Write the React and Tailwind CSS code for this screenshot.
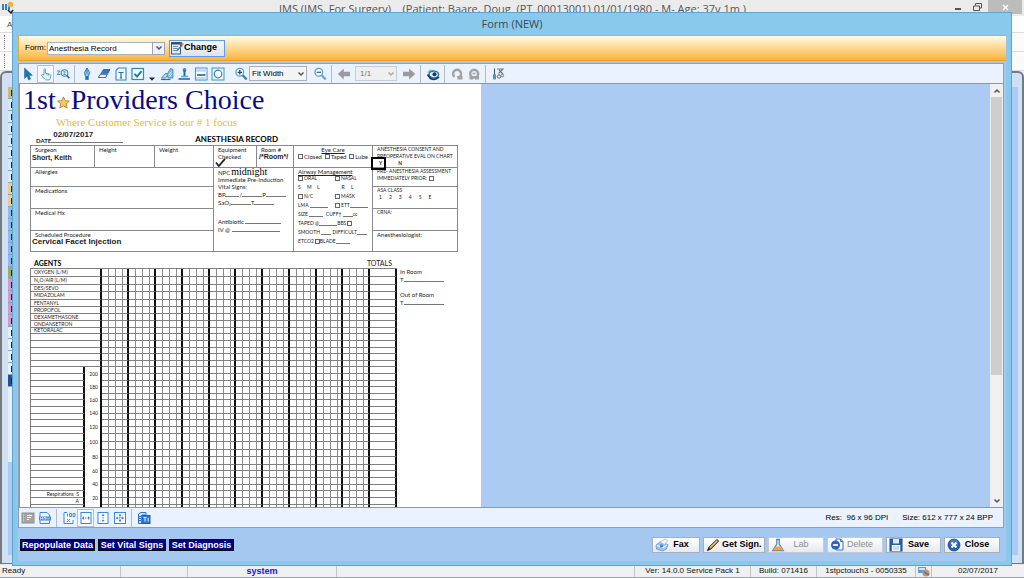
import React from "react";

const SANS = "font-['Liberation_Sans',Arial,sans-serif]";

/* ---------- icons ---------- */
function Svg({ size = 14, box = 14, children }) {
  return (
    <svg width={size} height={size} viewBox={`0 0 ${box} ${box}`} fill="none" aria-hidden="true" className="shrink-0">
      {children}
    </svg>
  );
}

const NAVY = "#1f6fae";
const icons = {
  pointer: <Svg><path d="M3.500 1v10.500l2.600-2.200 1.500 3.700 2-.9-1.500-3.500 3.200-.3z" fill="#1b78b8" stroke="#155f94" strokeWidth=".5" /></Svg>,
  hand: <Svg><path d="M5 7.800V2.600c0-1.200 1.600-1.200 1.600 0v3.600l4 .9c1 .3 1.300.8 1.200 1.800l-.4 2.600c-.2.9-.7 1.400-1.600 1.400H7.200c-.7 0-1.200-.3-1.600-.9L2.600 8.700c-.5-.9.7-1.700 1.400-.9z" fill="#e4f3fb" stroke="#4e9cc6" strokeWidth=".9" /><path d="M8 6.600v2M9.500 7v1.800" stroke="#4e9cc6" strokeWidth=".7" /></Svg>,
  zoomRect: <Svg><circle cx="8.500" cy="6" r="3.300" stroke="#3c86b6" strokeWidth="1.100" /><path d="M10.900 8.500l2.400 2.800" stroke={NAVY} strokeWidth="1.600" /><path d="M1 4h3L1.200 7.500H4.500" stroke="#3c86b6" strokeWidth=".9" /><path d="M7 4.800h2.600L7.500 7.500h2.600" stroke="#3c86b6" strokeWidth=".8" /></Svg>,
  pen: <Svg><path d="M7 1l2.600 4.600L8.400 9.500H5.600L4.400 5.600z" fill="#8cc8e8" stroke={NAVY} strokeWidth=".9" /><path d="M7 1v5.500" stroke={NAVY} strokeWidth=".8" /><rect x="5.300" y="9.800" width="3.400" height="3" fill={NAVY} /></Svg>,
  eraser: <Svg><path d="M6.500 2.500H13L8.500 10.500H1.500z" fill="#6fb0e6" stroke="#2a5fae" strokeWidth=".9" /><path d="M3.200 7.600h6.700l-1.400 2.900H1.500z" fill="#fff" stroke="#2a5fae" strokeWidth=".8" /><path d="M6.500 2.500H13l-2.400 4.200H4.200z" fill="#3b6fc0" /></Svg>,
  textDoc: <Svg><path d="M2 3.500L4.500 1H12v12H2z" fill="#f3fafe" stroke="#2f88b8" strokeWidth="1.100" /><path d="M4.500 5.500h5M7 5.500V11M5.800 11h2.400" stroke={NAVY} strokeWidth="1.200" /></Svg>,
  check: <Svg><rect x="1" y="1.500" width="11.500" height="11" fill="#f3fafe" stroke="#2f88b8" strokeWidth="1.200" /><path d="M3.500 6.800l2.600 2.800 4.400-5.400" stroke="#1b78a8" strokeWidth="1.900" /></Svg>,
  sign: <Svg><path d="M1 12.500h9.500" stroke={NAVY} strokeWidth="1.200" /><path d="M1.500 11L6 6l2 2-2.500 3z" fill="#b9dcf0" stroke="#3a88b4" strokeWidth=".9" /><path d="M7 7.500l3.500-6 2.500 1v8.500H8z" fill="#7ab9dc" stroke="#3a88b4" strokeWidth=".8" /><path d="M8.500 8.500l3-4M9.500 10l2.500-3.500" stroke="#fff" strokeWidth=".8" /></Svg>,
  stamp: <Svg><circle cx="7.500" cy="3" r="1.900" fill="#3b93c4" /><path d="M7.500 3v6" stroke={NAVY} strokeWidth="2" /><path d="M4 9.500h7" stroke="#62add6" strokeWidth="1.600" /><path d="M1.500 12h11.500" stroke={NAVY} strokeWidth="1.600" /></Svg>,
  lineBox: <Svg><rect x="1.500" y="1" width="11.500" height="12" fill="#fff" stroke="#4a9ad8" strokeWidth="1.100" /><path d="M2 3.500h11" stroke="#b7d8f4" strokeWidth="2.500" /><path d="M3 8h8.500" stroke={NAVY} strokeWidth="1.700" /><path d="M2 11h11" stroke="#b7d8f4" strokeWidth="1.800" /></Svg>,
  circleBox: <Svg><rect x="1" y="1" width="12" height="12" fill="#e8f5fc" stroke="#4a9fc8" strokeWidth="1.100" /><circle cx="7" cy="7" r="3.800" fill="#fff" stroke="#2f88b8" strokeWidth="1.200" /></Svg>,
  zoomIn: <Svg><circle cx="5.800" cy="5.300" r="3.900" fill="#f5fbff" stroke="#5b9fd0" strokeWidth="1.200" /><path d="M8.700 8.300l4 4.200" stroke="#3d78b5" strokeWidth="2.200" /><path d="M3.600 5.300H8M5.800 3.100v4.400" stroke="#27406e" strokeWidth="1.300" /></Svg>,
  zoomOut: <Svg><circle cx="5.800" cy="5.300" r="3.900" fill="#f5fbff" stroke="#5b9fd0" strokeWidth="1.200" /><path d="M8.700 8.300l4 4.200" stroke="#6aa3d4" strokeWidth="2.200" /><path d="M3.600 5.300H8" stroke="#3a5a8c" strokeWidth="1.200" /></Svg>,
  left: <Svg><path d="M.8 7l6-5.500v3.200H13v4.600H6.800v3.200z" fill="#9b9b9b" /></Svg>,
  right: <Svg><path d="M13.200 7l-6-5.500v3.200H1v4.600h6.200v3.200z" fill="#9b9b9b" /></Svg>,
  eye: <Svg><path d="M1 5.500L4 2.500l4.500.5-2 2.500z" fill="#6cc0e0" /><ellipse cx="7.800" cy="7.500" rx="4.800" ry="3.400" fill="#dff2fb" stroke="#1f6fa8" strokeWidth="1.400" /><circle cx="8.500" cy="7.300" r="2" fill="#123a66" /><path d="M1.500 7.500l3 4c3 1.500 6 1 8.500-1.500" stroke="#123a66" strokeWidth="1.700" /></Svg>,
  rotateL: <Svg><path d="M4.500 9.800A4 4 0 1 1 10 9.500" stroke="#a3a3a3" strokeWidth="2.400" /><path d="M7 9h5.500v3.500H7.500z" fill="#a3a3a3" /></Svg>,
  rotateR: <Svg><path d="M4.500 9.800A4 4 0 1 1 9.800 9.800" stroke="#a3a3a3" strokeWidth="2.400" /><path d="M2.500 9H12v3.500H8L7 11l-1 1.500H2.500z" fill="#a3a3a3" /><path d="M5.500 6.500h3" stroke="#a3a3a3" strokeWidth="1.600" /></Svg>,
  tools: <Svg><path d="M3.500 1.500v6" stroke="#555" strokeWidth="1.100" /><rect x="2" y="7" width="3" height="5.500" rx="1" fill="#4d92c4" /><path d="M6 2h6L7.500 6.500M8 3l4 4" stroke="#777" strokeWidth="1.100" /><circle cx="8" cy="9.500" r="1.700" stroke="#666" /><circle cx="11.200" cy="8.500" r="1.400" stroke="#777" /></Svg>,
  panel: <Svg><rect x="1" y="2" width="12" height="10" fill="#a5a5a5" stroke="#8d8d8d" /><path d="M2.500 3.500v7" stroke="#e8e8e8" strokeWidth=".8" strokeDasharray="1 1" /><path d="M6 4.500h5M6 6.500h4M6 8.500h2" stroke="#fff" /></Svg>,
  snap: <Svg><path d="M2 7V1.500h7L11.500 4v3" stroke="#3b86e0" fill="#fff" /><rect x="1" y="5.500" width="12" height="4" fill="#3b86e0" /><path d="M2.500 8.500v-2l1 1 1-1v2M6 8.500v-2h1.500v2M9 6.500v2M11 6.500v2" stroke="#fff" strokeWidth=".7" /><path d="M2 9.500v3h9.500v-3" stroke="#3b86e0" /></Svg>,
  full: <Svg><path d="M5 1.500H2v11h9V9" stroke="#3b86e0" fill="#fff" /><path d="M5.500 5.500V2.500M7.500 2.500h2v3h-2zM11 2.500h2v3h-2z" stroke="#3b86e0" strokeWidth=".9" /><path d="M5 8l3 3M8 8l-3 3" stroke="#3b86e0" strokeWidth=".9" /></Svg>,
  fitW: <Svg><rect x="2" y="1.500" width="10" height="11" fill="#fff" stroke="#3b86e0" /><path d="M3.500 7h7" stroke="#3b86e0" strokeDasharray="1.500 1" /><path d="M5 5L3 7l2 2zM9 5l2 2-2 2z" fill="#3b86e0" /></Svg>,
  fitH: <Svg><rect x="2" y="1.500" width="10" height="11" fill="#fff" stroke="#3b86e0" /><path d="M7 3.500v7" stroke="#3b86e0" strokeDasharray="1.500 1" /><path d="M5.500 5L7 3l1.500 2zM5.500 9L7 11l1.500-2z" fill="#3b86e0" /></Svg>,
  fitAll: <Svg><rect x="1.500" y="1.500" width="11" height="11" fill="#fff" stroke="#3b86e0" /><path d="M7 3v8M3 7h8" stroke="#3b86e0" strokeDasharray="1.500 1" /><path d="M5.500 5L7 3l1.500 2zM5.500 9L7 11l1.500-2zM5 5.500L3 7l2 1.500zM9 5.500L11 7 9 8.500z" fill="#3b86e0" /></Svg>,
  ocr: <Svg><path d="M1.500 3L4 1.500h5V4H5v8.500H1.500z" fill="#cfe3fb" stroke="#2f6fd0" /><path d="M2 5.500h2M2 7.500h2M2 9.500h2" stroke="#2f6fd0" /><rect x="5" y="4.500" width="8" height="8" fill="#2f78dc" stroke="#1f5cb8" /><path d="M6.500 6.500h3M8 6.500v4M11.200 7v3.500" stroke="#fff" strokeWidth=".9" /></Svg>,
  form: <Svg><rect x="1.500" y="1.500" width="9" height="11.500" fill="#dceaf5" stroke="#3c5c78" /><path d="M1.500 2.500h9" stroke="#2f4f78" strokeWidth="2" /><path d="M3 5.500h5M3 7.500h5M3 9.500h3" stroke="#5d7f9c" strokeWidth=".8" /><path d="M12 4.500L6.500 10" stroke="#4a90a8" strokeWidth="1.700" /><path d="M11.500 1v4.500M9.500 3.200h4" stroke="#b85a28" strokeWidth="1.300" /></Svg>,
  fax: <Svg><path d="M1 7l4-3 8 2.500-1.500 4.500-4 2L1.500 11z" fill="#9cc6ee" stroke="#5f97d0" strokeWidth=".8" /><path d="M5 4l5-3 2.500 1.500-3 4z" fill="#f4f9ff" stroke="#8ab4e0" strokeWidth=".7" /><path d="M2 7.500l6 2 4-2.500" stroke="#fff" strokeWidth="1.200" /><circle cx="6.500" cy="8" r="1.700" fill="#3c8be0" /></Svg>,
  pencil: <Svg><path d="M1.500 12.500L3 9l8-7.500L12.800 3 5 11z" fill="#c98a3c" stroke="#3a3f58" strokeWidth="1" /><path d="M4 9.500L11 3" stroke="#f2dfa8" strokeWidth=".9" /><path d="M1 13l2-3.500 1.500 1.500z" fill="#222" /></Svg>,
  flask: <Svg><path d="M5 1.500h4M5.800 1.500V6L1.800 12.500h10.400L8.200 6V1.500" fill="#eef6ff" stroke="#5c86c4" strokeWidth="1.300" /><path d="M4.300 8.500h5.400l2.200 3.800H2.100z" fill="#f5a81c" /></Svg>,
  remove: <Svg><path d="M6 1h4.500L13 3.500V12H6z" fill="#fff" stroke="#3b6fc0" /><path d="M10.500 1v2.500H13" stroke="#3b6fc0" /><circle cx="5.500" cy="7" r="4.500" fill="#2567c8" /><path d="M3 7h5" stroke="#fff" strokeWidth="1.800" /></Svg>,
  save: <Svg><rect x="1" y="1" width="12" height="12" fill="#2a62ae" stroke="#1d4a88" /><rect x="4" y="1" width="6" height="4.500" fill="#dce9f8" /><rect x="2.800" y="7" width="8.500" height="6" fill="#f4f8fd" /><path d="M4 9h6M4 11h6" stroke="#8db2e0" strokeWidth=".8" /></Svg>,
  close: <Svg><circle cx="7" cy="7" r="6" fill="#2562a8" stroke="#184888" strokeWidth=".8" /><circle cx="7" cy="5.500" r="4" fill="#5590d0" opacity=".6" /><path d="M4.500 4.500l5 5M9.500 4.500l-5 5" stroke="#fff" strokeWidth="1.800" /></Svg>,
};

function Chevron({ className, dir = "down" }) {
  return (
    <svg width="8" height="6" viewBox="0 0 8 6" fill="none" aria-hidden="true" className={className}>
      <path d={dir === "down" ? "M1.500 1.500L4 4l2.500-2.500" : "M1.500 4.500L4 2l2.500 2.500"} stroke="currentColor" strokeWidth="1.500" />
    </svg>
  );
}

function Tool({ icon, label, active }) {
  return (
    <button
      type="button"
      aria-label={label}
      className={`flex h-[18px] w-[17px] shrink-0 items-center justify-center border ${active ? "border-[#b8c0cc] bg-[#f5f8fd]" : "border-transparent"}`}
    >
      {icons[icon]}
    </button>
  );
}

function Sep() {
  return <div className="mx-[3px] h-[18px] w-px shrink-0 bg-[#b4bac6]" />;
}

/* ---------- main window behind the dialog ---------- */
const RAIL = [
  "bg-[#d9b96a]", "bg-[#d5e7f8]", "bg-[#d5e7f8]", "bg-[#d5e7f8]", "bg-[#d5e7f8]", "bg-[#d5e7f8]", "bg-[#d5e7f8]",
  "bg-[#d5e7f8]", "bg-[#f0cd84]", "bg-[#f0cd84]", "bg-[#8fbcf0]", "bg-[#8fbcf0]", "bg-[#8fbcf0]", "bg-[#8fbcf0]",
  "bg-[#8fbcf0]", "bg-[#9cae62]", "bg-[#d996d0]", "bg-[#d996d0]", "bg-[#d996d0]", "bg-[#d996d0]", "bg-[#e3eff9]",
  "bg-[#e3eff9]", "bg-[#e3eff9]", "bg-[#e3eff9]", "bg-[#1f5494]",
];

function Grip() {
  return (
    <div className="flex h-[19px] items-center border-b border-[#dcdcdc] bg-[#fafafa] pl-1">
      <div className="h-3.5 w-px border-l border-dotted border-[#777]" />
    </div>
  );
}

function StatusCell({ className, children }) {
  return <div className={`flex items-center border-r border-[#c4c4c4] whitespace-nowrap ${className}`}>{children}</div>;
}

function MainWindow() {
  return (
    <div className="flex h-full flex-col bg-[#f0f0f0]">
      <div className="flex h-4 shrink-0 items-start bg-[#ebebeb]">
        <svg width="13" height="14" viewBox="0 0 13 14" className="ml-px" aria-hidden="true">
          <path d="M1 4h2v6H1zM4 4h2v6H4zM7 4h2v6H7z" fill="#2f7fd8" />
          <circle cx="9.500" cy="4.500" r="2.800" fill="#f0b43c" />
          <path d="M7 10l3 3 2-3" stroke="#222" strokeWidth="1.500" fill="none" />
        </svg>
        <div className="flex-1 pl-14 text-center font-['Open_Sans','Noto_Sans',sans-serif] text-[11px] leading-[18px] whitespace-pre text-[#555]">
          {"IMS (IMS, For Surgery)    (Patient: Baare, Doug  (PT_00013001) 01/01/1980 - M- Age: 37y 1m )"}
        </div>
        <div className="flex items-start gap-3">
          <button type="button" aria-label="Minimize" className="mt-2 h-0.5 w-1.5 bg-[#555]" />
          <button type="button" aria-label="Restore" className="mt-[3px]">
            <svg width="9" height="8" viewBox="0 0 9 8" fill="none" stroke="#555">
              <path d="M2.500 2.500V.5h6v4.500h-2" /><path d="M.5 3h6v4.500h-6z" />
            </svg>
          </button>
          <button type="button" aria-label="Close window" className="mr-0.5 -ml-1.5 flex h-3.5 w-[34px] items-center justify-center bg-[#bcbcbc]">
            <svg width="7" height="7" viewBox="0 0 7 7" stroke="#fff" strokeWidth="1.400"><path d="M1 1l5 5M6 1L1 6" /></svg>
          </button>
        </div>
      </div>
      <div className="h-[17px] shrink-0 border-b border-[#dcdcdc] bg-white pl-[7px] text-[8px] leading-[17px] text-[#444]">A</div>
      <Grip />
      <Grip />
      <div className="flex min-h-0 flex-1 justify-between rounded-t-md border-2 border-b border-[#77797d] bg-[#cfe0f4] pt-3.5 pb-2">
        <div className="ml-1.5 flex w-1 flex-col overflow-hidden bg-[#a9cbf5]">
          {RAIL.map((c, i) => (
            <div key={i} className={`flex h-3 shrink-0 items-center justify-end border-b border-[#8aa4c0] ${c}`}>
              <div className="h-1.5 w-px bg-[#223]" />
            </div>
          ))}
          <div className="h-[75px] bg-[#e4effa]" />
        </div>
        <div className="mr-1 -ml-1 w-2 bg-[#a9cbf5]" />
      </div>
      <div className="flex h-3.5 shrink-0 items-stretch border-t border-b border-t-[#e8e8e8] border-b-[#8fa6b0] bg-[#f0f0f0] text-[8px] leading-3 text-[#111]">
        <StatusCell className="w-[121px] pl-0.5">Ready</StatusCell>
        <StatusCell className="w-[67px]" />
        <StatusCell className="w-[149px] justify-center text-[9px] font-bold text-[#1010e8]">system</StatusCell>
        <StatusCell className="flex-1" />
        <StatusCell className="w-[116px] justify-center">Ver: 14.0.0 Service Pack 1</StatusCell>
        <StatusCell className="w-[66px] justify-center">Build: 071416</StatusCell>
        <StatusCell className="w-[99px] justify-center">1stpctouch3 - 0050335</StatusCell>
        <StatusCell className="w-4 justify-center">
          <svg width="13" height="11" viewBox="0 0 13 11" aria-hidden="true">
            <rect x="1" y="1" width="8" height="6" fill="#5b9be0" /><rect x="2" y="2" width="6" height="2" fill="#cfe4fa" />
            <circle cx="9" cy="7" r="3.500" fill="#e2894a" /><path d="M7 6l5 3" stroke="#3f7fd0" strokeWidth="1.600" />
          </svg>
        </StatusCell>
        <div className="flex w-[92px] items-center justify-center">02/07/2017</div>
      </div>
    </div>
  );
}

/* ---------- anesthesia record sheet ---------- */
const LINE = "border-[#8a8a8a]";

function Box() {
  return <input type="checkbox" className="h-[5px] w-[5px] shrink-0 appearance-none border border-[#666] bg-white" />;
}
function Option({ children, after }) {
  return (
    <label className="flex items-center gap-px">
      {!after && <Box />}
      {children}
      {after && <Box />}
    </label>
  );
}
function Blank({ className }) {
  return <span className={`h-[5px] shrink-0 border-b border-[#777] ${className}`} />;
}
function Row({ className = "", children }) {
  return <div className={`flex h-[9px] items-center whitespace-pre ${className}`}>{children}</div>;
}

function Header() {
  return (
    <div>
      <div className="flex items-center pt-0.5 pl-[3px] font-['Liberation_Serif',serif] text-[28px] leading-[27px] text-[#0b0b80]">
        1st
        <svg width="13" height="13" viewBox="0 0 13 13" className="mx-px mt-1.5" aria-hidden="true">
          <path d="M6.500.8l1.700 3.900 4.200.4-3.200 2.800 1 4.200-3.700-2.200-3.700 2.200 1-4.200L.6 5.100l4.200-.4z" fill="#f6c868" stroke="#a8742c" strokeWidth=".8" />
        </svg>
        Providers Choice
      </div>
      <div className="pt-px pl-9 font-['Liberation_Serif',serif] text-[11px] leading-4 text-[#e8b838]">Where Customer Service is our # 1 focus</div>
      <div className="flex h-[15px] items-end pl-4 text-[6px] leading-[8px] font-bold">
        <span>DATE</span>
        <span className={`mb-0.5 h-3 w-[72px] border-b border-[#777] pl-0.5 text-[8px] leading-[7px] ${SANS}`}>02/07/2017</span>
        <h1 className="ml-[72px] text-[8px] leading-[12px] text-black">ANESTHESIA RECORD</h1>
      </div>
    </div>
  );
}

function Patient() {
  return (
    <div className={`w-[183px] shrink-0 border-r ${LINE} flex flex-col`}>
      <div className={`flex h-[22px] border-b ${LINE}`}>
        <div className={`w-16 border-r ${LINE}`}>
          <div className="pl-1">Surgeon</div>
          <div className={`pl-px text-[7px] leading-[9px] font-bold ${SANS}`}>Short, Keith</div>
        </div>
        <div className={`w-[60px] border-r ${LINE} pl-1`}>Height</div>
        <div className="pl-1">Weight</div>
      </div>
      <div className={`h-[19px] border-b ${LINE} pl-1`}>Allergies</div>
      <div className={`h-[22px] border-b ${LINE} pl-1`}>Medications</div>
      <div className={`h-[22px] border-b ${LINE} pl-1`}>Medical Hx</div>
      <div className="pl-1">Scheduled Procedure</div>
      <div className={`pl-px text-[8px] leading-[8px] font-bold ${SANS}`}>Cervical Facet Injection</div>
    </div>
  );
}

function Preop() {
  return (
    <div className={`w-20 shrink-0 border-r ${LINE}`}>
      <div className={`flex h-[22px] border-b ${LINE}`}>
        <div className={`relative w-[43px] border-r ${LINE} pl-1`}>
          Equipment<br />Checked
          <svg width="11" height="9" viewBox="0 0 11 9" className="absolute bottom-0 left-px" aria-hidden="true">
            <path d="M1 4.500L3.800 8 10 .8" stroke="#222" strokeWidth="1.800" fill="none" />
          </svg>
        </div>
        <div>
          <div className="pl-1">Room #</div>
          <div className={`pl-0.5 text-[7px] leading-[7px] font-bold ${SANS}`}>/*Room*/</div>
        </div>
      </div>
      <div className="pl-1">
        <div className="flex items-center gap-px">
          NPC<span className="font-['Liberation_Serif',serif] text-[10px] leading-[8px] text-black">midnight</span>
        </div>
        <div className="whitespace-nowrap">Immediate Pre-Induction</div>
        <div>Vital Signs:</div>
        <Row>BP<Blank className="w-3.5" />/<Blank className="w-5" />{"    "}P<Blank className="w-5" /></Row>
        <Row className="-mt-px">SaO₂<Blank className="w-5" />{"   "}T<Blank className="w-5" /></Row>
        <Row className="mt-2.5">Antibiotic <Blank className="w-9" /></Row>
        <Row className="-mt-px">IV @ <Blank className="w-12" /></Row>
      </div>
    </div>
  );
}

function Airway() {
  return (
    <div className={`w-[79px] shrink-0 border-r ${LINE} pl-1`}>
      <div className={`-ml-1 h-[22px] border-b ${LINE}`}>
        <div className="text-center underline">Eye Care</div>
        <div className="flex justify-between pr-1 pl-1">
          <Option>Closed</Option><Option>Taped</Option><Option>Lube</Option>
        </div>
      </div>
      <div className="underline">Airway Management</div>
      <div className="-mt-px text-[5px]">
        <div className="grid grid-cols-2">
          <Row><Option>ORAL</Option></Row>
          <Row><Option>NASAL</Option></Row>
          <Row>{"S     M    L"}</Row>
          <Row>{"     R     L"}</Row>
          <Row><Option>N/C</Option></Row>
          <Row><Option>MASK</Option></Row>
          <Row>LMA <Blank className="w-[18px]" /></Row>
          <Row><Option>ETT</Option><Blank className="w-[18px]" /></Row>
        </div>
        <Row>SIZE <Blank className="w-3.5" />{"  CUFF† "}<Blank className="w-2.5" />cc</Row>
        <Row>TAPED @<Blank className="w-[18px]" />{"  "}<Option after>BBS</Option></Row>
        <Row>SMOOTH <Blank className="w-2.5" /> DIFFICULT<Blank className="w-2.5" /></Row>
        <Row><Option after>ETCO2</Option>{"      "}BLADE<Blank className="w-3.5" /></Row>
      </div>
    </div>
  );
}

function Consent() {
  return (
    <div className="relative flex min-w-0 flex-1 flex-col text-[5px] whitespace-pre">
      <div className={`h-[22px] border-b ${LINE} pl-1`}>
        ANESTHESIA CONSENT AND<br />PREOPERATIVE EVAL ON CHART
        <div className="flex gap-4 pl-0.5 leading-[7px] font-bold"><span>Y</span><span>N</span></div>
      </div>
      <div className="absolute top-[11px] -left-0.5 h-[13px] w-[15px] border-2 border-black" />
      <div className={`h-[19px] border-b ${LINE} pl-1`}>
        PRE- ANESTHESIA ASSESSMENT<br />
        <Option after>IMMEDIATELY PRIOR: </Option>
      </div>
      <div className={`h-[22px] border-b ${LINE} pl-1`}>
        ASA CLASS
        <div className="flex gap-[7px] pl-0.5"><span>1</span><span>2</span><span>3</span><span>4</span><span>5</span><span>E</span></div>
      </div>
      <div className={`h-[22px] border-b ${LINE} pl-1`}>CRNA:</div>
      <div className="pl-1 text-[6px]">Anesthesiologist:</div>
    </div>
  );
}

const AGENTS = ["OXYGEN (L/M)", "N₂O/AIR (L/M)", "DES/SEVO", "MIDAZOLAM", "FENTANYL", "PROPOFOL", "DEXAMETHASONE", "ONDANSETRON", "KETORALAC"];
const AGENT_HEIGHTS = [8, 8, 7, 8, 7, 7, 7, 7, 6];
const TAIL_HEIGHTS = [7, 7, 6, 7, 6, 7, 7, 6, 7, 6, 7, 7, 6, 7, 7, 8, 8, 7, 8, 6, 7, 7, 6, 7, 7, 7, 6, 7];
const HEIGHTS = [...AGENT_HEIGHTS, ...TAIL_HEIGHTS];
const SCALE_START = 14;
const GROUPS = [27, 27, 27, 27, 26, 27, 27, 27, 26, 27];
const SIDE = { 32: "Respirations  S", 33: "A" };

function Grid() {
  return (
    <table className="w-[366px] table-fixed border-separate border-spacing-0 border-t border-l border-[#808080] text-[5px] leading-[5px]">
      <colgroup>
        <col className="w-[54px]" />
        <col className="w-[17px]" />
        {GROUPS.map((w, g) => [7, 7, 7, w - 21].map((c, i) => <col key={`${g}-${i}`} style={{ width: c }} />))}
        <col className="w-[27px]" />
      </colgroup>
      <tbody>
        {HEIGHTS.map((h, r) => {
          const k = r - SCALE_START;
          return (
            <tr key={r} style={{ height: h }}>
              {k < 0 ? (
                <th colSpan={2} scope="row" className="border-r-2 border-b border-r-[#111] border-b-[#808080] p-0 pl-[3px] text-left font-normal whitespace-nowrap">
                  {AGENTS[r]}
                </th>
              ) : (
                <th scope="row" className="border-r-2 border-b border-r-[#111] border-b-[#808080] p-0 pr-1 text-right font-normal whitespace-pre">{SIDE[r]}</th>
              )}
              {k >= 0 && k % 2 === 0 && (
                <td rowSpan={2} className="border-r-2 border-[#111] p-0 pr-0.5 text-right">{k < 20 ? 200 - k * 10 : ""}</td>
              )}
              {Array.from({ length: 40 }, (_, c) => (
                <td key={c} className={`border-b border-b-[#808080] p-0 ${c % 4 === 3 ? "border-r-2 border-r-[#111]" : "border-r border-r-[#8a8a8a]"}`} />
              ))}
              <td className="border-r-2 border-b border-r-[#111] border-b-[#808080] p-0" />
            </tr>
          );
        })}
      </tbody>
    </table>
  );
}

function Sheet() {
  return (
    <div className="w-[461px] shrink-0 overflow-hidden bg-white font-[Lato,sans-serif] text-[6px] leading-[7px] text-[#222]">
      <Header />
      <div className={`mr-[23px] ml-2.5 flex h-[107px] border ${LINE}`}>
        <Patient />
        <Preop />
        <Airway />
        <Consent />
      </div>
      <div className="mt-1.5 ml-2.5 flex h-[10px] items-center justify-between pr-[89px] pl-1 text-[7px]">
        <h2 className="font-bold text-black">AGENTS</h2>
        <span>TOTALS</span>
      </div>
      <div className="ml-2.5 flex items-start gap-[3px]">
        <Grid />
        <div className="flex flex-col gap-[7px]">
          <div>In Room<Row>T<Blank className="w-10" /></Row></div>
          <div>Out of Room<Row>T<Blank className="w-10" /></Row></div>
        </div>
      </div>
    </div>
  );
}

/* ---------- dialog ---------- */
function ActionButton({ icon, label, width, disabled }) {
  return (
    <button
      type="button"
      disabled={disabled}
      className={`flex h-4 items-center gap-0.5 border bg-linear-to-b from-white to-[#e6e9ee] pl-0.5 text-[9px] ${width} ${disabled ? "border-[#c4cbd6] text-[#8c8c8c]" : "border-[#a4aebc] font-bold text-black"}`}
    >
      {icons[icon]}
      <span className="flex-1 pr-2 text-center whitespace-nowrap">{label}</span>
    </button>
  );
}

function MacroButton({ label, width }) {
  return (
    <button type="button" className={`h-3 border border-black bg-[#00007c] text-[9px] leading-[10px] font-bold whitespace-nowrap text-white ${width}`}>
      {label}
    </button>
  );
}

function FormDialog() {
  return (
    <section
      role="dialog"
      aria-label="Form (NEW)"
      className="absolute inset-3 flex flex-col border border-[#62a3cb] bg-[#89c9ec] px-[5px] pb-1"
    >
      <div className="h-[22px] shrink-0 text-center font-['Open_Sans','Noto_Sans',sans-serif] text-[11px] leading-[22px] text-[#3c4a55]">Form (NEW)</div>
      <div className="flex min-h-0 flex-1 flex-col bg-[#a5c8f1]">
        <div className="flex h-[26px] shrink-0 items-center border-t border-b border-l border-t-[#c8b060] border-b-[#f0a020] border-l-[#f0a828] bg-linear-to-b from-[#fffbe6] via-[#fdd890] to-[#fbb232] pl-1.5 text-[8px]">
          <label htmlFor="form-name" className="w-[22px]">Form:</label>
          <div className="relative w-[118px]">
            <select id="form-name" className="h-[13px] w-full appearance-none border border-[#a8b4c4] bg-white pl-px leading-[11px]">
              <option>Anesthesia Record</option>
            </select>
            <span className="pointer-events-none absolute inset-y-0 right-0 flex w-[13px] items-center justify-center border border-[#9aa6b8] bg-[#eef1f5] text-[#555]">
              <Chevron />
            </span>
          </div>
          <button type="button" className="ml-1 flex h-[17px] w-14 items-center border border-[#5c9ce8] bg-linear-to-b from-[#f4f6fa] to-[#dfe3ea] text-[9px] font-bold">
            {icons.form}
            <span>Change</span>
          </button>
        </div>

        <div className="mt-0.5 mr-0.5 flex min-h-0 flex-1 flex-col border border-[#959daf] bg-[#eaf2ff]">
          <div className="flex h-[19px] shrink-0 items-center text-[8px]">
            <Tool icon="pointer" label="Select" />
            <div className="w-px shrink-0" />
            <Tool icon="hand" label="Pan" active />
            <Tool icon="zoomRect" label="Zoom area" />
            <Sep />
            <Tool icon="pen" label="Pen" />
            <Tool icon="eraser" label="Eraser" />
            <Tool icon="textDoc" label="Text" />
            <Tool icon="check" label="Check mark" />
            <button type="button" aria-label="More marks" className="flex w-3 justify-center pt-2.5">
              <svg width="6" height="4" viewBox="0 0 6 4" aria-hidden="true"><path d="M0 .5h6L3 3.800z" fill="#222" /></svg>
            </button>
            <Tool icon="sign" label="Signature" />
            <Tool icon="stamp" label="Stamp" />
            <Tool icon="lineBox" label="Line" />
            <Tool icon="circleBox" label="Shape" />
            <div className="w-1.5 shrink-0" />
            <Tool icon="zoomIn" label="Zoom in" />
            <div className="relative w-[58px] shrink-0">
              <select aria-label="Zoom" className="h-[15px] w-full appearance-none border border-[#a8b0bc] bg-[#f3f4f6] pl-0.5 leading-[13px]">
                <option>Fit Width</option>
              </select>
              <Chevron className="pointer-events-none absolute top-[5px] right-0.5 text-[#555]" />
            </div>
            <div className="w-1 shrink-0" />
            <Tool icon="zoomOut" label="Zoom out" />
            <Sep />
            <Tool icon="left" label="Previous page" />
            <div className="relative ml-[3px] w-[42px] shrink-0">
              <select aria-label="Page" disabled className="h-[15px] w-full appearance-none border border-[#c8ccd2] bg-[#eeeff1] pl-1 leading-[13px] text-[#777] opacity-100">
                <option>1/1</option>
              </select>
              <Chevron className="pointer-events-none absolute top-[5px] right-0.5 text-[#aaa]" />
            </div>
            <div className="w-[3px] shrink-0" />
            <Tool icon="right" label="Next page" />
            <Sep />
            <Tool icon="eye" label="Preview" />
            <Sep />
            <Tool icon="rotateL" label="Rotate left" />
            <Tool icon="rotateR" label="Rotate right" />
            <Sep />
            <Tool icon="tools" label="Settings" />
          </div>

          <div className="flex min-h-0 flex-1 border border-r-0 border-[#8f96a4] bg-[#abcbf3]">
            <Sheet />
            <div className="flex-1" />
            <div className="flex w-[13px] shrink-0 flex-col bg-[#f0f0f0] px-px">
              <button type="button" aria-label="Scroll up" className="flex h-[13px] items-center justify-center text-[#555]"><Chevron dir="up" /></button>
              <div className="min-h-0 flex-1"><div className="h-[70%] bg-[#cdcdcd]" /></div>
              <button type="button" aria-label="Scroll down" className="flex h-[13px] items-center justify-center text-[#555]"><Chevron /></button>
            </div>
          </div>

          <div className="flex h-[19px] shrink-0 items-center text-[8px]">
            <Tool icon="panel" label="Thumbnails" />
            <Tool icon="snap" label="Image" />
            <Sep />
            <Tool icon="full" label="Actual size" />
            <Tool icon="fitW" label="Fit width" active />
            <Tool icon="fitH" label="Fit height" />
            <Tool icon="fitAll" label="Fit page" />
            <Sep />
            <Tool icon="ocr" label="Recognize text" />
            <div className="ml-auto flex gap-3.5 pr-2.5 whitespace-pre">
              <span>Res:  96 x 96 DPI</span>
              <span>Size: 612 x 777 x 24 BPP</span>
            </div>
          </div>
        </div>

        <div className="flex h-[33px] shrink-0 items-center justify-between pr-1.5 pl-0.5">
          <div className="flex gap-[3px]">
            <MacroButton label="Repopulate Data" width="w-[75px]" />
            <MacroButton label="Set Vital Signs" width="w-[68px]" />
            <MacroButton label="Set Diagnosis" width="w-[65px]" />
          </div>
          <div className="flex gap-[3px]">
            <ActionButton icon="fax" label="Fax" width="w-12" />
            <ActionButton icon="pencil" label="Get Sign." width="w-[62px]" />
            <ActionButton icon="flask" label="Lab" width="w-14" disabled />
            <ActionButton icon="remove" label="Delete" width="w-14" disabled />
            <ActionButton icon="save" label="Save" width="w-[55px]" />
            <ActionButton icon="close" label="Close" width="w-14" />
          </div>
        </div>
      </div>
    </section>
  );
}

export default function App() {
  return (
    <div className={`relative h-screen w-full overflow-hidden text-black ${SANS}`}>
      <MainWindow />
      <FormDialog />
    </div>
  );
}
